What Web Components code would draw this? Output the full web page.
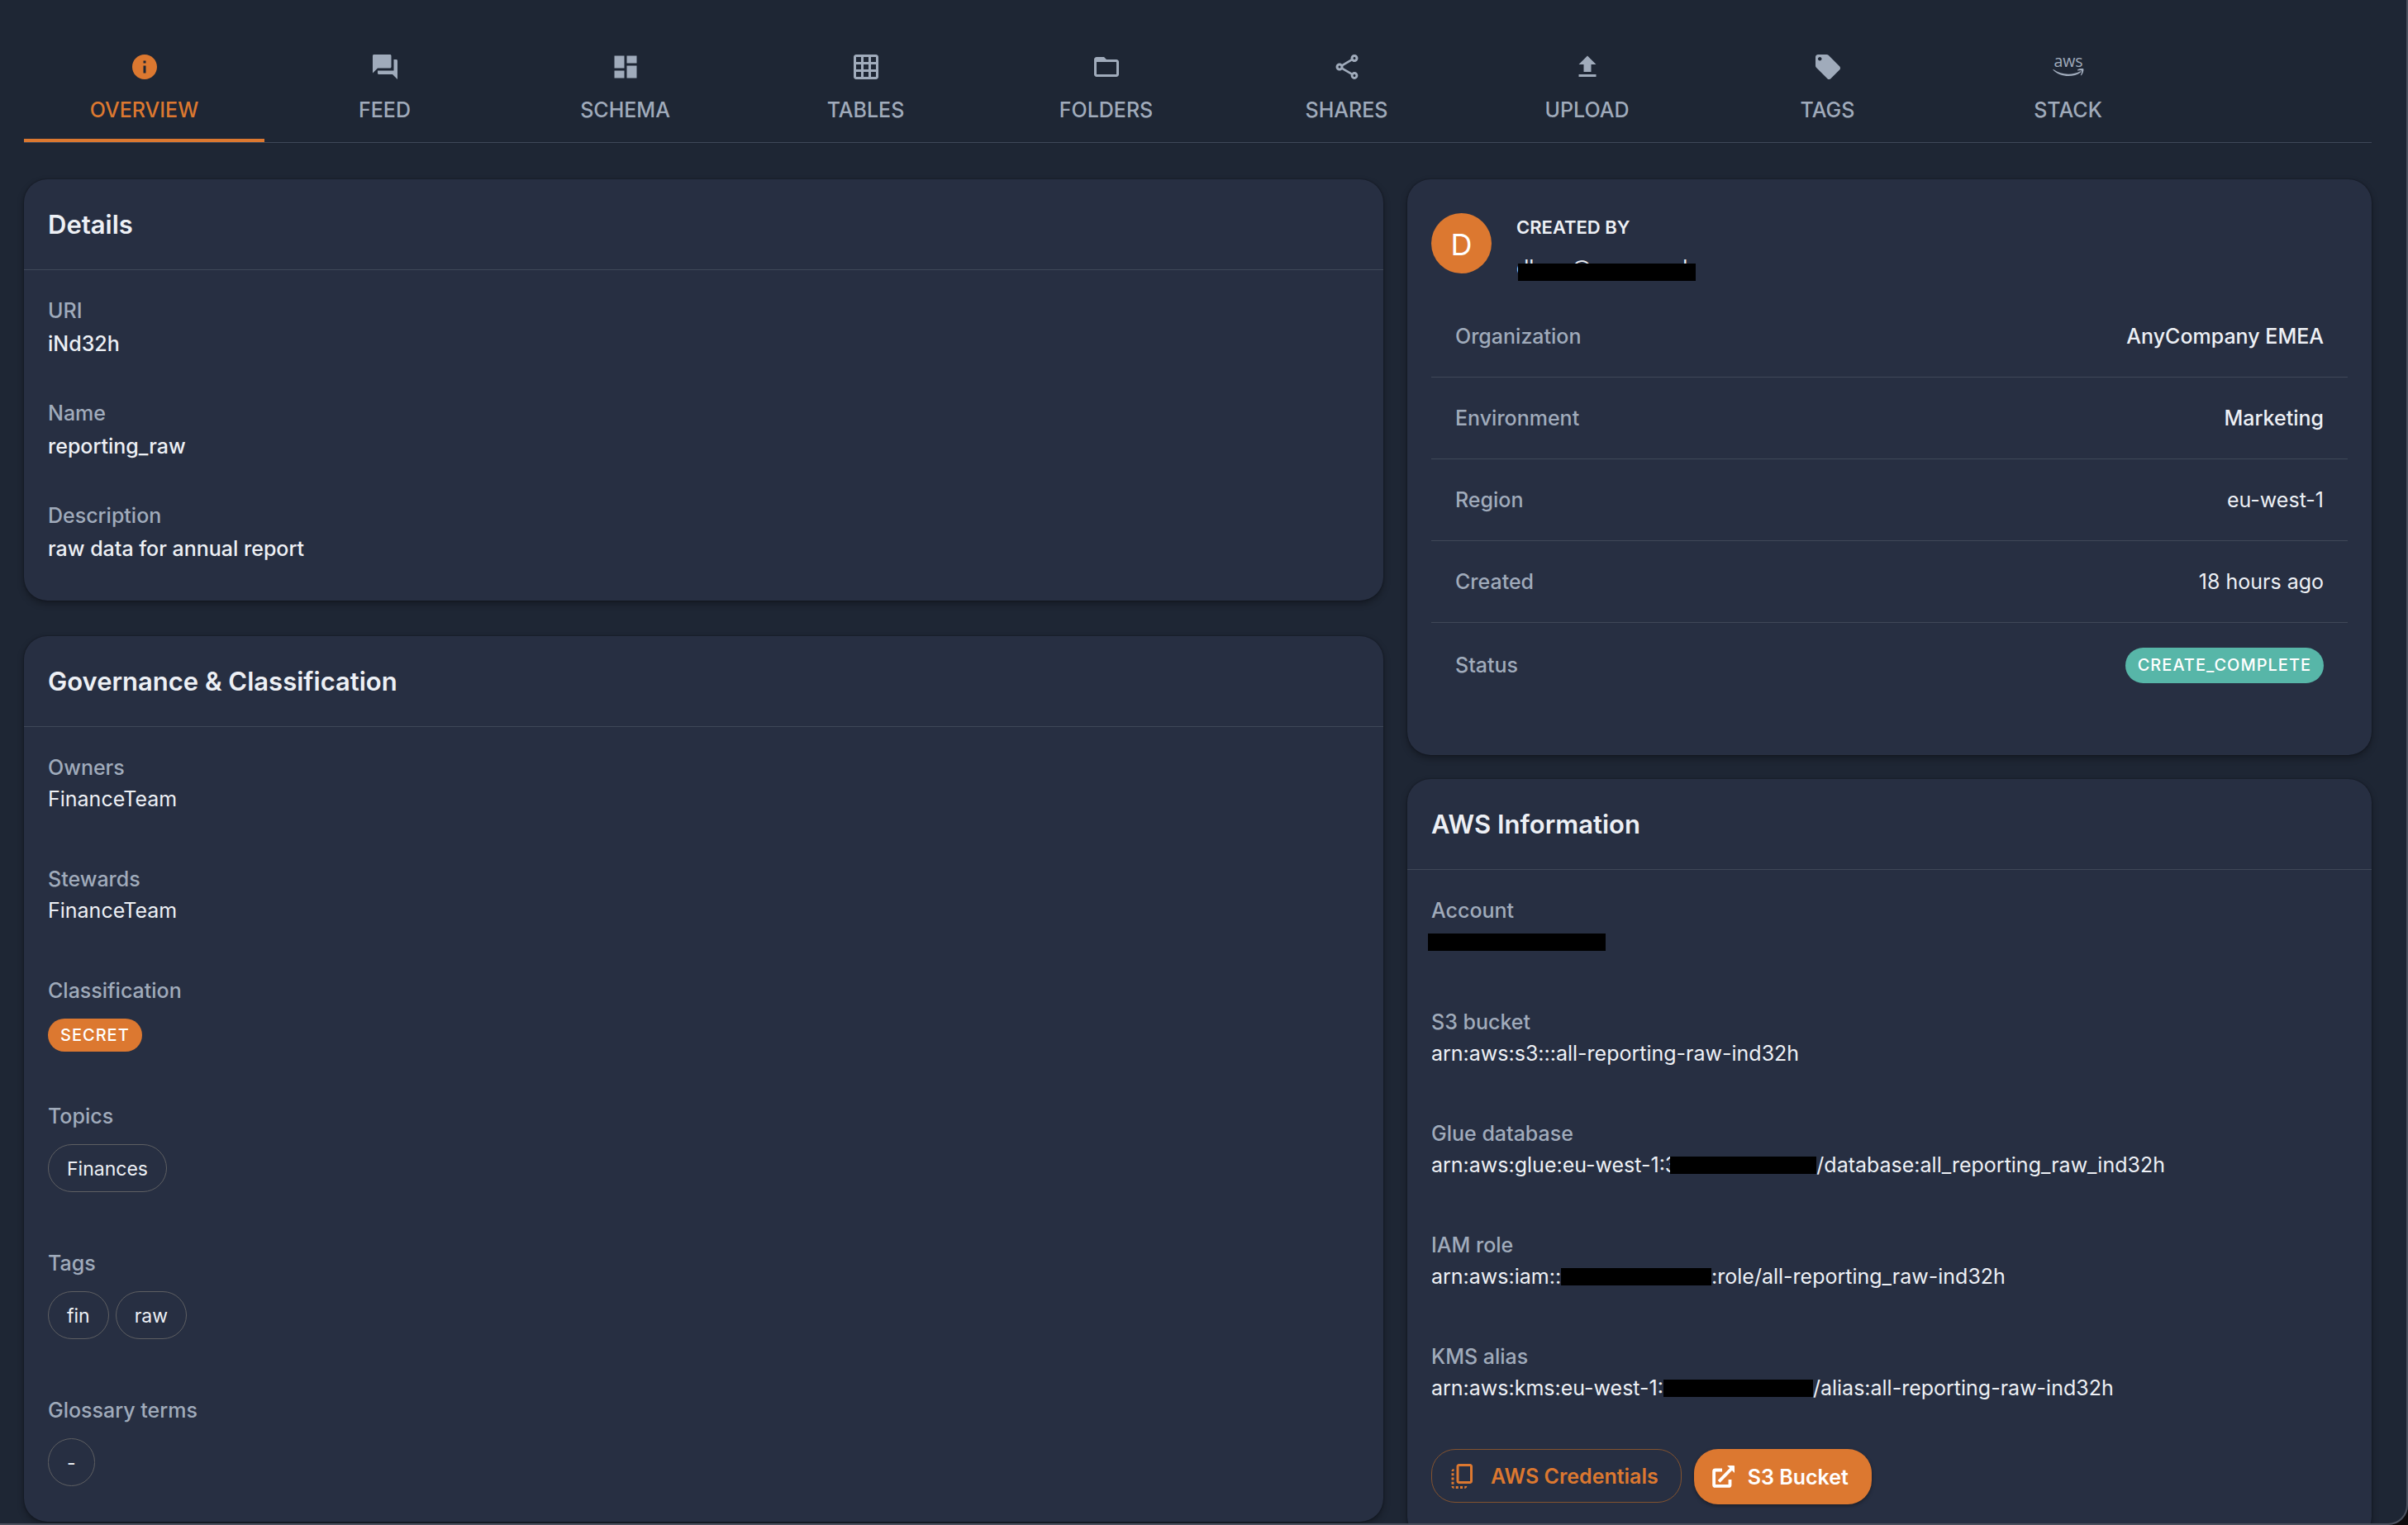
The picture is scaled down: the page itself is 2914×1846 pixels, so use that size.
<!DOCTYPE html>
<html lang="en">
<head>
<meta charset="utf-8">
<title>Dataset overview</title>
<style>
  :root {
    --bg: #1e2634;
    --paper: #272f42;
    --text: #edf0f5;
    --muted: #a0abbb;
    --accent: #dc7830;
    --success: #57b6a8;
    --line: #3f4858;
    --edge: #4b505d;
    --pad: 29px;
  }
  html, body { margin: 0; height: 100%; background: var(--bg); }
  body { font-family: Inter, "Liberation Sans", sans-serif; font-size: 25px; line-height: 37px; color: var(--text); overflow: hidden; }
</style>
</head>
<body>
<app-shell>
  <nav-tabs slot="tabs">
    <nav-tab icon="info" active>OVERVIEW</nav-tab>
    <nav-tab icon="forum">FEED</nav-tab>
    <nav-tab icon="dashboard">SCHEMA</nav-tab>
    <nav-tab icon="grid">TABLES</nav-tab>
    <nav-tab icon="folder">FOLDERS</nav-tab>
    <nav-tab icon="share">SHARES</nav-tab>
    <nav-tab icon="upload">UPLOAD</nav-tab>
    <nav-tab icon="tag">TAGS</nav-tab>
    <nav-tab icon="aws">STACK</nav-tab>
  </nav-tabs>

  <info-card slot="main" heading="Details" compact>
    <info-field label="URI" strong>iNd32h</info-field>
    <info-field label="Name" strong>reporting_raw</info-field>
    <info-field label="Description" strong>raw data for annual report</info-field>
  </info-card>

  <info-card slot="main" heading="Governance &amp; Classification">
    <info-field label="Owners">FinanceTeam</info-field>
    <info-field label="Stewards">FinanceTeam</info-field>
    <info-field label="Classification" chips><status-pill>SECRET</status-pill></info-field>
    <info-field label="Topics" chips spaced><tag-chip>Finances</tag-chip></info-field>
    <info-field label="Tags" chips spaced><tag-chip>fin</tag-chip><tag-chip>raw</tag-chip></info-field>
    <info-field label="Glossary terms" chips><tag-chip>-</tag-chip></info-field>
  </info-card>

  <owner-card slot="side" initial="D">
    <masked-text slot="email"></masked-text>
    <meta-row label="Organization" strong>AnyCompany EMEA</meta-row>
    <meta-row label="Environment" strong>Marketing</meta-row>
    <meta-row label="Region">eu-west-1</meta-row>
    <meta-row label="Created">18 hours ago</meta-row>
    <meta-row label="Status" last><status-pill tone="success">CREATE_COMPLETE</status-pill></meta-row>
  </owner-card>

  <info-card slot="side" heading="AWS Information">
    <info-field label="Account"><redact-bar style="--w:215px" outset></redact-bar></info-field>
    <info-field label="S3 bucket">arn:aws:s3:::all-reporting-raw-ind32h</info-field>
    <info-field label="Glue database">arn:aws:glue:eu-west-1:3<redact-bar style="--w:177px" over></redact-bar>/database:all_reporting_raw_ind32h</info-field>
    <info-field label="IAM role">arn:aws:iam::<redact-bar style="--w:182px"></redact-bar>:role/all-reporting_raw-ind32h</info-field>
    <info-field label="KMS alias">arn:aws:kms:eu-west-1:<redact-bar style="--w:181px"></redact-bar>/alias:all-reporting-raw-ind32h</info-field>
    <action-button slot="actions" icon="copy">AWS Credentials</action-button>
    <action-button slot="actions" icon="launch" solid>S3 Bucket</action-button>
  </info-card>
</app-shell>

<script>
const ICONS = {
  info: '<path d="M12 2C6.48 2 2 6.48 2 12s4.48 10 10 10 10-4.48 10-10S17.52 2 12 2zm1 15h-2v-6h2v6zm0-8h-2V7h2v2z"/>',
  forum: '<path d="M21 6h-2v9H6v2c0 .55.45 1 1 1h11l4 4V7c0-.55-.45-1-1-1zm-4 6V3c0-.55-.45-1-1-1H3c-.55 0-1 .45-1 1v14l4-4h10c.55 0 1-.45 1-1z"/>',
  dashboard: '<path d="M3 13h8V3H3v10zm0 8h8v-6H3v6zm10 0h8V11h-8v10zm0-18v6h8V3h-8z"/>',
  grid: '<path d="M20 2H4c-1.1 0-2 .9-2 2v16c0 1.1.9 2 2 2h16c1.1 0 2-.9 2-2V4c0-1.1-.9-2-2-2zM8 20H4v-4h4v4zm0-6H4v-4h4v4zm0-6H4V4h4v4zm6 12h-4v-4h4v4zm0-6h-4v-4h4v4zm0-6h-4V4h4v4zm6 12h-4v-4h4v4zm0-6h-4v-4h4v4zm0-6h-4V4h4v4z"/>',
  folder: '<path d="M20 6h-8l-2-2H4c-1.1 0-1.99.9-1.99 2L2 18c0 1.1.9 2 2 2h16c1.1 0 2-.9 2-2V8c0-1.1-.9-2-2-2zm0 12H4V8h16v10z"/>',
  share: '<path d="M18 16.08c-.76 0-1.44.3-1.96.77L8.91 12.7c.05-.23.09-.46.09-.7s-.04-.47-.09-.7l7.05-4.11c.54.5 1.25.81 2.04.81 1.66 0 3-1.34 3-3s-1.34-3-3-3-3 1.34-3 3c0 .24.04.47.09.7L8.04 9.81C7.5 9.31 6.79 9 6 9c-1.66 0-3 1.34-3 3s1.34 3 3 3c.79 0 1.5-.31 2.04-.81l7.12 4.16c-.05.21-.08.43-.08.65 0 1.61 1.31 2.92 2.92 2.92s2.92-1.31 2.92-2.92c0-1.61-1.31-2.92-2.92-2.92zM18 4c.55 0 1 .45 1 1s-.45 1-1 1-1-.45-1-1 .45-1 1-1zM6 13c-.55 0-1-.45-1-1s.45-1 1-1 1 .45 1 1-.45 1-1 1zm12 7.02c-.55 0-1-.45-1-1s.45-1 1-1 1 .45 1 1-.45 1-1 1z"/>',
  upload: '<path d="M5 20h14v-2H5v2zm0-10h4v6h6v-6h4l-7-7-7 7z"/>',
  tag: '<path d="M21.41 11.58l-9-9C12.05 2.22 11.55 2 11 2H4c-1.1 0-2 .9-2 2v7c0 .55.22 1.05.59 1.42l9 9c.36.36.86.58 1.41.58.55 0 1.05-.22 1.41-.59l7-7c.37-.36.59-.86.59-1.41 0-.55-.23-1.06-.59-1.42zM5.5 7C4.67 7 4 6.33 4 5.5S4.67 4 5.5 4 7 4.67 7 5.5 6.33 7 5.5 7z"/>',
  aws: '<text x="12" y="12.3" text-anchor="middle" font-family="Open Sans, sans-serif" font-weight="500" font-size="13">aws</text><path d="M0 14c3.400 2.600 7.600 3.800 12 3.800 3.400 0 6.900-.8 9.700-2.300.5-.3.900.3.500.7-2.700 2.200-6.500 3.200-10.200 3.200-4.700 0-9.100-1.700-12.300-4.900-.3-.3 0-.7.3-.5z"/><path d="M19.500 14.100c1-.7 4.300-1.100 4.700-.5.400.6-.3 3.900-1.900 5.300-.3.200-.5.100-.4-.2.400-.9 1.200-3 .8-3.500-.4-.5-2.200-.3-3-.2-.3 0-.4-.7-.2-.9z"/>',
  copy: '<path d="M18 2H9c-1.100 0-2 .9-2 2v12c0 1.100.9 2 2 2h9c1.100 0 2-.9 2-2V4c0-1.100-.9-2-2-2zm0 14H9V4h9v12zM3 15v-2h2v2H3zm0-5.500h2v2H3v-2zM10 20h2v2h-2v-2zm-7-1.500v-2h2v2H3zM5 22c-1.100 0-2-.9-2-2h2v2zm3.500 0h-2v-2h2v2zm5 0v-2h2c0 1.100-.9 2-2 2zM5 6v2H3c0-1.100.9-2 2-2z"/>',
  launch: '<path d="M10.700 4.900H3.200a1.300 1.300 0 0 0-1.300 1.300v14.600a1.300 1.300 0 0 0 1.300 1.300h14.600a1.300 1.300 0 0 0 1.300-1.300V15M7.200 17.200 20.500 3.600" fill="none" stroke="currentColor" stroke-width="3.400"/><path d="M16 0h7.200a.8.8 0 0 1 .8.800V8z"/>'
};
const svg = name => `<svg viewBox="0 0 24 24" aria-hidden="true">${ICONS[name]}</svg>`;

const define = (name, render) => customElements.define(name, class extends HTMLElement {
  constructor() { super(); this.attachShadow({ mode: 'open' }); }
  connectedCallback() { this.shadowRoot.innerHTML = render(this); }
});

define('app-shell', () => `
  <style>
    :host { display: block; height: 100vh; overflow: hidden; position: relative; box-sizing: border-box; padding: 43px 44px 0 var(--pad); }
    .columns { display: grid; grid-template-columns: 1645fr 1167fr; gap: var(--pad); align-items: start; margin-top: 44px; }
    .main { display: grid; gap: 43px; }
    .side { display: grid; gap: var(--pad); }
    .frame { position: absolute; inset: -2px 0 0 -30px; border: 2px solid var(--edge); border-radius: 0 0 24px 0; box-shadow: 0 0 0 40px #0d0a0c; pointer-events: none; }
  </style>
  <slot name="tabs"></slot>
  <div class="columns">
    <main class="main"><slot name="main"></slot></main>
    <aside class="side"><slot name="side"></slot></aside>
  </div>
  <div class="frame"></div>`);

define('nav-tabs', () => `
  <style>
    :host { display: block; }
    nav { display: flex; border-bottom: 1px solid var(--line); }
  </style>
  <nav><slot></slot></nav>`);

define('nav-tab', el => `
  <style>
    :host { display: block; flex: 0 1 291px; }
    a { display: flex; flex-direction: column; align-items: center; height: 129px; padding-top: 20px; box-sizing: border-box; gap: 14px;
        border-bottom: 4px solid transparent; color: var(--muted); text-decoration: none; font-weight: 500; line-height: 40px; }
    a.active { color: var(--accent); border-color: var(--accent); }
    svg { width: 36px; height: 36px; fill: currentColor; overflow: visible; display: block; }
  </style>
  <a href="#" class="${el.hasAttribute('active') ? 'active' : ''}">${svg(el.getAttribute('icon'))}<span><slot></slot></span></a>`);

const CARD = `
    :host { display: block; background: var(--paper); border-radius: 28px; box-shadow: 0 0 2px rgba(0,0,0,.5), 0 4px 8px rgba(0,0,0,.32); }`;

define('info-card', el => `
  <style>${CARD}
    h2 { margin: 0; padding: 32px var(--pad); font-size: 31px; line-height: 45px; font-weight: 600; border-bottom: 1px solid var(--line); }
    .body { padding: var(--pad) var(--pad) 43px; display: grid; gap: 58px; }
    :host([compact]) .body { gap: 44px; --value: 40px; }
    .actions { display: flex; align-items: flex-start; gap: 15px; margin-top: -3px; }
  </style>
  <h2>${el.getAttribute('heading').replace('&', '&amp;')}</h2>
  <div class="body"><slot></slot>${el.querySelector('[slot=actions]') ? '<div class="actions"><slot name="actions"></slot></div>' : ''}</div>`);

define('info-field', el => `
  <style>
    :host { display: block; }
    :host([spaced]) { margin-bottom: 8px; }
    :host([strong]) .value { font-weight: 500; }
    .label { color: var(--muted); font-weight: 500; line-height: 40px; }
    .value { line-height: var(--value, 37px); min-height: var(--value, 37px); white-space: nowrap; }
    .chips { display: flex; gap: 8px; margin-top: 14px; }
  </style>
  <div class="label">${el.getAttribute('label')}</div>
  <div class="${el.hasAttribute('chips') ? 'chips' : 'value'}"><slot></slot></div>`);

define('tag-chip', () => `
  <style>
    :host { display: block; box-sizing: border-box; height: 58px; padding: 0 22px; border: 1px solid #5e5f62; border-radius: 29px; font-size: 23px; line-height: 58px; }
  </style>
  <slot></slot>`);

define('status-pill', () => `
  <style>
    :host { display: block; box-sizing: border-box; padding: 0 15px; border-radius: 22px; background: var(--accent); color: #fff;
            font-size: 20px; line-height: 40px; font-weight: 500; letter-spacing: 1px; }
    :host([tone=success]) { background: var(--success); line-height: 43px; }
  </style>
  <slot></slot>`);

define('redact-bar', () => `
  <style>
    :host { display: inline-block; vertical-align: -2px; width: var(--w); height: 21px; background: #000; position: relative; }
    :host([outset]) { margin-left: -4px; }
    :host([over]) { margin-left: -9px; }
  </style>`);

define('masked-text', () => `
  <style>
    :host { display: block; position: relative; width: 220px; height: 40px; line-height: 40px; }
    .bits { display: grid; grid-template-columns: 67px 125px 28px; }
    redact-bar { position: absolute; left: 2px; top: 15px; --w: 215px; }
  </style>
  <div class="bits"><span>dl</span><span>@</span><span>d</span></div><redact-bar></redact-bar>`);

define('owner-card', el => `
  <style>${CARD}
    .who { display: flex; gap: 30px; padding: 34px var(--pad) 0; height: 107px; }
    .avatar { width: 73px; height: 73px; margin-top: 7px; border-radius: 50%; background: var(--accent); color: #fff; font-size: 36px; line-height: 76px; text-align: center; }
    h3 { margin: 0 0 5px; font-size: 22px; line-height: 48px; font-weight: 600; }
    .rows { padding: 0 var(--pad) 57px; }
  </style>
  <div class="who"><div class="avatar">${el.getAttribute('initial')}</div><div><h3>CREATED BY</h3><slot name="email"></slot></div></div>
  <div class="rows"><slot></slot></div>`);

define('meta-row', el => `
  <style>
    :host { display: flex; justify-content: space-between; align-items: center; box-sizing: border-box; height: 99px; padding: 0 var(--pad); border-bottom: 1px solid var(--line); }
    :host([last]) { border: 0; height: 103px; }
    .label { color: var(--muted); font-weight: 500; }
    :host([strong]) .value { font-weight: 500; }
  </style>
  <div class="label">${el.getAttribute('label')}</div><div class="value"><slot></slot></div>`);

define('action-button', el => `
  <style>
    :host { display: block; }
    button { display: flex; align-items: center; gap: 16px; box-sizing: border-box; height: 65px; padding: 0 27px 0 19px; margin: 0;
             border: 1px solid #83532f; border-radius: 29px; background: none; color: var(--accent); font: 600 25px/40px Inter, sans-serif; white-space: nowrap; }
    svg { width: 36px; height: 36px; fill: currentColor; }
    button.solid { height: 67px; border: 0; padding: 0 28px 0 22px; background: var(--accent); color: #fff; box-shadow: 0 2px 4px rgba(0,0,0,.35); }
    .solid svg { width: 27px; height: 27px; }
  </style>
  <button type="button" class="${el.hasAttribute('solid') ? 'solid' : ''}">${svg(el.getAttribute('icon'))}<span><slot></slot></span></button>`);
</script>
</body>
</html>
